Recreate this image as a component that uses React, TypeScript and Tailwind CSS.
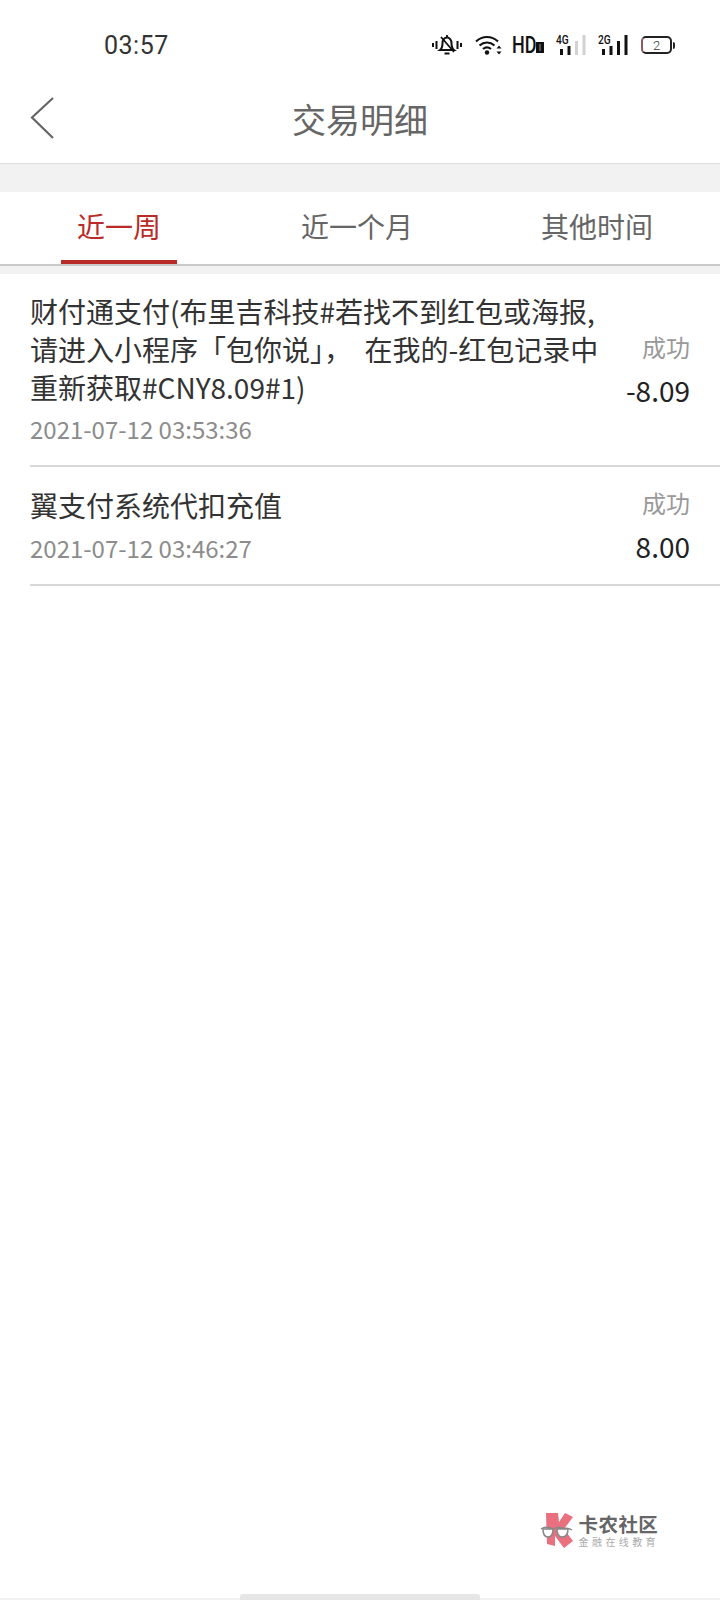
const cjk = "font-['Noto_Sans_CJK_SC','Noto_Sans',sans-serif]";

function MutedBell() {
  return (
    <svg width="30" height="22" viewBox="0 0 30 22" fill="none" stroke="#111" strokeWidth="2" className="block">
      <path d="M1 9v4M4.500 7v8M25.500 7v8M29 9v4" />
      <path d="M8 16c2-1.500 2.500-3.500 2.500-7 0-3 2-5.500 4.500-5.500s4.500 2.500 4.500 5.500c0 3.500.5 5.500 2.500 7z" />
      <path d="M12.500 19.500h5M15 1v2M9 3l13 15" strokeWidth="1.800" />
    </svg>
  );
}

function Wifi() {
  return (
    <svg width="27" height="20" viewBox="0 0 27 20" fill="none" className="block">
      <path d="M1 6.500c6.500-6 15.500-6 22 0M4.500 10.500c4.500-4 10.500-4 15 0M8 14c2.500-2 5.500-2 8 0" stroke="#111" strokeWidth="2.200" />
      <circle cx="12" cy="17.500" r="2.200" fill="#111" />
      <path d="M24 10.500l2.500 3h-5zM24 19.500l2.500-3h-5z" fill="#111" />
    </svg>
  );
}

function Signal({ label, filled }: { label: string; filled: number }) {
  const bars = [
    { x: 4, h: 6 },
    { x: 11.500, h: 9 },
    { x: 19, h: 14 },
    { x: 26.500, h: 20 },
  ];
  return (
    <span className="relative block h-5 w-[30px]">
      <svg width="30" height="20" viewBox="0 0 30 20" className="absolute left-0 top-0">
        {bars.map((b, i) => (
          <rect key={b.x} x={b.x} y={20 - b.h} width="3" height={b.h} fill={i < filled ? "#111" : "#d2d2d2"} />
        ))}
      </svg>
      <span className="absolute left-0 top-0 origin-top-left scale-x-[0.85] font-['Roboto',sans-serif] text-[12px] font-medium leading-[11px] text-[#111]">{label}</span>
    </span>
  );
}

function Battery() {
  return (
    <span className="flex items-center">
      <span className="flex h-[18px] w-[31px] items-center justify-center rounded-[5px] border-2 border-[#222] border-l-[#8a5a60] font-['Roboto',sans-serif] text-[13px] font-light leading-none text-[#333]">2</span>
      <span className="ml-px h-[7px] w-0.5 rounded-r-sm bg-[#222]" />
    </span>
  );
}

function StatusBar() {
  return (
    <div className="flex h-[90px] items-center justify-between pl-[104px] pr-[45px]">
      <span className="font-['Roboto',sans-serif] text-[25px] leading-none tracking-[0.5px] text-[#333]">03:57</span>
      <div className="flex items-center">
        <MutedBell />
        <span className="ml-[13px]"><Wifi /></span>
        <span className="ml-[10px] flex w-[33px] items-end font-['Roboto',sans-serif] text-[23px] leading-none text-[#111]">
          <span className="inline-block w-6 origin-left scale-x-[0.78] font-medium">HD</span>
          <span className="mb-[4px] h-[11px] w-[8px] border-2 border-x-[3px] border-[#111] bg-[#555]" />
        </span>
        <span className="ml-[11px]"><Signal label="4G" filled={2} /></span>
        <span className="ml-[12px]"><Signal label="2G" filled={4} /></span>
        <span className="ml-[13px]"><Battery /></span>
      </div>
    </div>
  );
}

function Header() {
  return (
    <div className="relative flex h-[74px] justify-center border-b border-[#dedede] pt-[12px]">
      <svg width="26" height="44" viewBox="0 0 26 44" fill="none" stroke="#666" strokeWidth="2.200" className="absolute left-[29px] top-[6px]">
        <path d="M24 2L3 21.500 24 42" />
      </svg>
      <span className="text-[34px] leading-[34px] text-[#666]">交易明细</span>
    </div>
  );
}

function Tabs() {
  return (
    <div className="grid h-[74px] grid-cols-[238px_238px_242px] border-b-2 border-[#c9c9c9] bg-white">
      <div className="flex justify-center">
        <div className="flex h-[72px] w-[116px] justify-center border-b-4 border-[#b92b27] pt-[20px] text-[28px] leading-[28px] text-[#b92b27]">近一周</div>
      </div>
      <div className="flex justify-center pt-[20px] text-[28px] leading-[28px] text-[#666]">近一个月</div>
      <div className="flex justify-center pt-[20px] text-[28px] leading-[28px] text-[#666]">其他时间</div>
    </div>
  );
}

type Row = { title: string[]; time: string; amount: string; top: string; gap: string };

const rows: Row[] = [
  {
    title: ["财付通支付(布里吉科技#若找不到红包或海报,", "请进入小程序「包你说」，\u00a0 在我的-红包记录中", "重新获取#CNY8.09#1)"],
    time: "2021-07-12 03:53:36",
    amount: "-8.09",
    top: "pt-[18px]",
    gap: "mt-[5.500px]",
  },
  {
    title: ["翼支付系统代扣充值"],
    time: "2021-07-12 03:46:27",
    amount: "8.00",
    top: "pt-[19px]",
    gap: "mt-[7.500px]",
  },
];

function RowItem({ row }: { row: Row }) {
  return (
    <div className={`ml-[30px] flex items-center justify-between border-b-2 border-[#d8d8d8] pb-[20px] pr-[30px] ${row.top}`}>
      <div>
        {row.title.map((line) => (
          <div key={line} className="whitespace-nowrap text-[28px] leading-[38px] text-[#333]">{line}</div>
        ))}
        <div className={`${row.gap} text-[24px] leading-[33px] text-[#8c8c8c]`}>{row.time}</div>
      </div>
      <div className="flex flex-col items-end">
        <div className="text-[24px] leading-[32px] text-[#999]">成功</div>
        <div className="mt-[11px] text-[28px] leading-[32px] text-[#222]">{row.amount}</div>
      </div>
    </div>
  );
}

function Watermark() {
  return (
    <div className="flex items-start gap-[5px]">
      <svg width="34" height="36" viewBox="0 0 34 36" className="block">
        <path d="M6 1h12l1 9 6-9 8 4-9 12 9 12-9 7-9-12v10L7 32z" fill="#e8707f" />
        <path d="M1 17c3-2 6-2 9-1l3 1c2-1 6-2 10-1 3 0 6 0 9 2" fill="none" stroke="#888" strokeWidth="1.500" />
        <path d="M3 17h10c0 4-1 8-5 8-3 0-5-3-5-8z" fill="#fff" stroke="#888" strokeWidth="1.500" />
        <path d="M17 17h11c0 5-2 8-6 8-3 0-5-3-5-8z" fill="#fff" stroke="#888" strokeWidth="1.500" />
      </svg>
      <div className="flex flex-col pt-[2px]">
        <span className="text-[19.500px] font-bold leading-[20px] tracking-[0.4px] text-[#666]">卡农社区</span>
        <span className="mt-[2px] text-[10px] leading-[12px] tracking-[3.400px] text-[#aaa]">金融在线教育</span>
      </div>
    </div>
  );
}

export default function App() {
  return (
    <div className={`relative flex h-[1600px] w-[720px] flex-col overflow-hidden bg-white ${cjk}`}>
      <StatusBar />
      <Header />
      <div className="h-[28px] bg-[#f2f2f2]" />
      <Tabs />
      <div className="h-2 bg-[#f2f2f2]" />
      {rows.map((r) => (
        <RowItem key={r.time} row={r} />
      ))}
      <div className="flex-1" />
      <div className="flex justify-end pb-[52px] pr-[61px]">
        <Watermark />
      </div>
      <div className="absolute bottom-0 left-0 h-0.5 w-full bg-[#f2f2f2]" />
      <div className="absolute bottom-0 left-[240px] h-1.5 w-[240px] rounded-t-[3px] bg-[#e6e6e6]" />
    </div>
  );
}
